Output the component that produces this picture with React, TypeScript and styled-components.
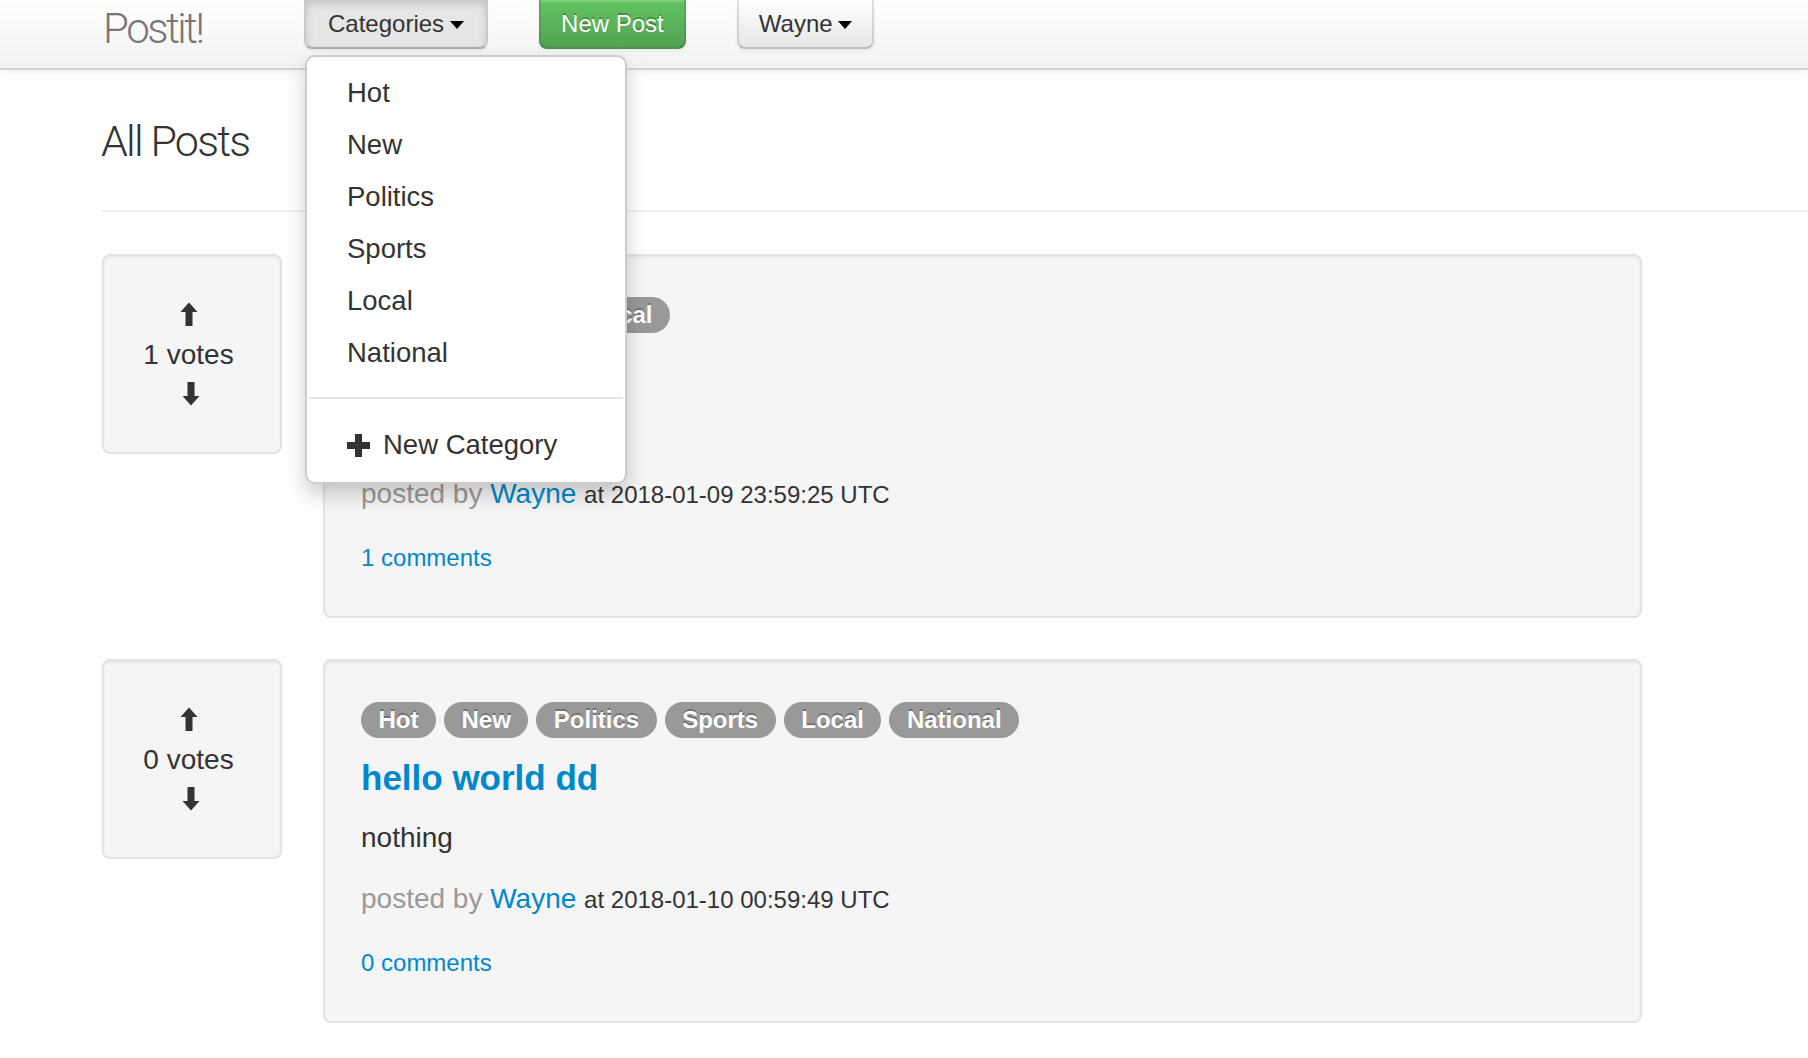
import React from 'react';
import styled, { createGlobalStyle, css } from 'styled-components';

const GlobalStyle = createGlobalStyle`
  html, body {
    margin: 0;
    padding: 0;
    background: #fff;
  }
  body {
    font-family: 'Liberation Sans', Arial, sans-serif;
    color: #333;
    overflow-x: hidden;
  }
  * {
    box-sizing: border-box;
  }
`;

const Navbar = styled.header`
  display: flex;
  align-items: flex-start;
  height: 70px;
  padding-left: 103px;
  background-image: linear-gradient(to bottom, #ffffff, #f2f2f2);
  border-bottom: 2px solid #d4d4d4;
  box-shadow: 0 2px 8px rgba(0, 0, 0, 0.07);
  position: relative;
  z-index: 2;
`;

const Brand = styled.a`
  width: 201px;
  margin-top: 8px;
  font-family: Roboto, 'Liberation Sans', sans-serif;
  font-weight: 300;
  font-size: 42px;
  line-height: 42px;
  letter-spacing: -2.4px;
  color: #777;
  text-decoration: none;
`;

const NavButtons = styled.div`
  display: flex;
  align-items: flex-start;
  gap: 51px;
`;

const DropdownWrap = styled.div`
  position: relative;
`;

interface NavButtonProps {
  $variant?: 'default' | 'active' | 'success';
}

const NavButton = styled.button<NavButtonProps>`
  display: flex;
  align-items: center;
  gap: 6px;
  height: 49px;
  padding: 0 22px;
  font-family: 'Liberation Sans', Arial, sans-serif;
  font-size: 24px;
  line-height: 49px;
  color: #333;
  border: 2px solid rgba(0, 0, 0, 0.12);
  border-top: none;
  border-bottom-color: rgba(0, 0, 0, 0.25);
  border-radius: 0 0 8px 8px;
  background-image: linear-gradient(to bottom, #ffffff, #e6e6e6);
  box-shadow: inset 0 2px 0 rgba(255, 255, 255, 0.2), 0 2px 4px rgba(0, 0, 0, 0.05);
  cursor: pointer;

  ${(p) =>
    p.$variant === 'active' &&
    css`
      background-image: none;
      background-color: #e6e6e6;
      box-shadow: inset 0 4px 8px rgba(0, 0, 0, 0.15), 0 2px 2px rgba(0, 0, 0, 0.05);
    `}

  ${(p) =>
    p.$variant === 'success' &&
    css`
      padding: 0 20px;
      color: #fff;
      text-shadow: 0 -2px 0 rgba(0, 0, 0, 0.25);
      background-image: linear-gradient(to bottom, #62c462, #51a351);
      border-color: rgba(0, 0, 0, 0.1) rgba(0, 0, 0, 0.1) rgba(0, 0, 0, 0.25);
    `}

  ${(p) =>
    p.$variant === 'default' &&
    css`
      padding: 0 20px;
      gap: 5px;
    `}
`;

const Caret = styled.span`
  width: 0;
  height: 0;
  border-top: 8px solid #000;
  border-left: 7.5px solid transparent;
  border-right: 7.5px solid transparent;
  margin-top: 2px;
`;

const Menu = styled.ul`
  position: absolute;
  top: calc(100% + 6px);
  left: 1px;
  width: 322px;
  margin: 0;
  padding: 10px 0 11px;
  list-style: none;
  background: #fff;
  border: 2px solid rgba(0, 0, 0, 0.2);
  border-radius: 10px;
  box-shadow: 0 10px 20px rgba(0, 0, 0, 0.2);
  z-index: 10;
`;

const MenuItem = styled.li`
  display: flex;
  align-items: center;
  gap: 13px;
  height: 52px;
  padding-left: 40px;
  font-size: 27.5px;
  color: #333;
  white-space: nowrap;
  cursor: pointer;
`;

const MenuDivider = styled.li`
  height: 2px;
  margin: 18px 2px 20px;
  background: #e5e5e5;
`;

const Page = styled.main`
  padding-left: 102px;
`;

const PageHeader = styled.div`
  padding: 50px 0 47px;
  border-bottom: 2px solid #eee;
  margin-bottom: 42px;
`;

const Title = styled.h1`
  margin: 0 0 0 -1px;
  font-family: Roboto, 'Liberation Sans', sans-serif;
  font-weight: 300;
  font-size: 43px;
  line-height: 43px;
  letter-spacing: -1.8px;
  color: #333;
`;

const PostRow = styled.div`
  display: flex;
  align-items: flex-start;
  gap: 41px;
  margin-bottom: 41px;
`;

const well = css`
  background: #f5f5f5;
  border: 2px solid #e3e3e3;
  border-radius: 8px;
  box-shadow: inset 0 2px 2px rgba(0, 0, 0, 0.05);
`;

const VoteBox = styled.div`
  ${well};
  width: 180px;
  height: 200px;
  display: flex;
  flex-direction: column;
  align-items: center;
  justify-content: center;
  padding-right: 7px;
`;

const VoteArrow = styled.svg<{ $shift?: number }>`
  display: block;
  width: 18px;
  height: 24px;
  fill: #333;
  margin-left: ${(p) => p.$shift || 0}px;
`;

const VoteCount = styled.div`
  font-size: 28px;
  line-height: 40px;
  margin: 9px 0 7px;
  color: #333;
`;

const PostCard = styled.article`
  ${well};
  width: 1319px;
  padding: 41px 36px 41px;
`;

const Tags = styled.div`
  display: flex;
  flex-wrap: wrap;
  gap: 8px;
`;

const Tag = styled.span`
  display: inline-block;
  padding: 4px 17.5px;
  font-size: 24px;
  line-height: 28px;
  font-weight: bold;
  color: #fff;
  text-shadow: 0 -2px 0 rgba(0, 0, 0, 0.25);
  background: #999;
  border-radius: 18px;
`;

const PostTitle = styled.a`
  display: block;
  margin-top: 18px;
  font-size: 35px;
  line-height: 44px;
  font-weight: bold;
  color: #0088cc;
  text-decoration: none;
`;

const PostBody = styled.p`
  margin: 18px 0 0;
  font-size: 28px;
  line-height: 40px;
  color: #333;
`;

const Meta = styled.p`
  margin: 24px 0 0;
  font-size: 28px;
  line-height: 34px;
  color: #333;
`;

const Muted = styled.span`
  color: #999;
`;

const Link = styled.a`
  color: #0088cc;
  text-decoration: none;
`;

const Small = styled.small`
  font-size: 24px;
`;

const Comments = styled.a`
  display: block;
  margin-top: 29px;
  font-size: 24px;
  line-height: 34px;
  color: #0088cc;
  text-decoration: none;
`;

const ArrowUp = ({ shift }: { shift?: number }) => (
  <VoteArrow $shift={shift} viewBox="0 0 18 24">
    <path d="M9 0.5 L17.5 10 H12.5 V24 H5.5 V10 H0.5 Z" />
  </VoteArrow>
);

const ArrowDown = ({ shift }: { shift?: number }) => (
  <VoteArrow $shift={shift} viewBox="0 0 18 24">
    <path d="M9 23.5 L17.5 14 H12.5 V0 H5.5 V14 H0.5 Z" />
  </VoteArrow>
);

const PlusIcon = () => (
  <svg width="23" height="23" viewBox="0 0 23 23">
    <path d="M8 0 H15 V8 H23 V15 H15 V23 H8 V15 H0 V8 H8 Z" fill="#333" />
  </svg>
);

const categories = ['Hot', 'New', 'Politics', 'Sports', 'Local', 'National'];

const posts = [
  {
    votes: 1,
    tags: ['Hot', 'Politics', 'Local'],
    title: 'hello world',
    body: 'test',
    author: 'Wayne',
    date: '2018-01-09 23:59:25 UTC',
    comments: 1,
  },
  {
    votes: 0,
    tags: ['Hot', 'New', 'Politics', 'Sports', 'Local', 'National'],
    title: 'hello world dd',
    body: 'nothing',
    author: 'Wayne',
    date: '2018-01-10 00:59:49 UTC',
    comments: 0,
  },
];

const App = () => {
  return (
    <>
      <GlobalStyle />
      <Navbar>
        <Brand href="#">Postit!</Brand>
        <NavButtons>
          <DropdownWrap>
            <NavButton $variant="active">
              Categories <Caret />
            </NavButton>
            <Menu>
              {categories.map((c) => (
                <MenuItem key={c}>{c}</MenuItem>
              ))}
              <MenuDivider />
              <MenuItem>
                <PlusIcon />
                New Category
              </MenuItem>
            </Menu>
          </DropdownWrap>
          <NavButton $variant="success">New Post</NavButton>
          <NavButton $variant="default">
            Wayne <Caret />
          </NavButton>
        </NavButtons>
      </Navbar>

      <Page>
        <PageHeader>
          <Title>All Posts</Title>
        </PageHeader>

        {posts.map((post) => (
          <PostRow key={post.date}>
            <VoteBox>
              <ArrowUp />
              <VoteCount>{post.votes} votes</VoteCount>
              <ArrowDown shift={5} />
            </VoteBox>
            <PostCard>
              <Tags>
                {post.tags.map((t) => (
                  <Tag key={t}>{t}</Tag>
                ))}
              </Tags>
              <PostTitle href="#">{post.title}</PostTitle>
              <PostBody>{post.body}</PostBody>
              <Meta>
                <Muted>posted by </Muted>
                <Link href="#">{post.author}</Link> <Small>at {post.date}</Small>
              </Meta>
              <Comments href="#">{post.comments} comments</Comments>
            </PostCard>
          </PostRow>
        ))}
      </Page>
    </>
  );
};

export default App;
